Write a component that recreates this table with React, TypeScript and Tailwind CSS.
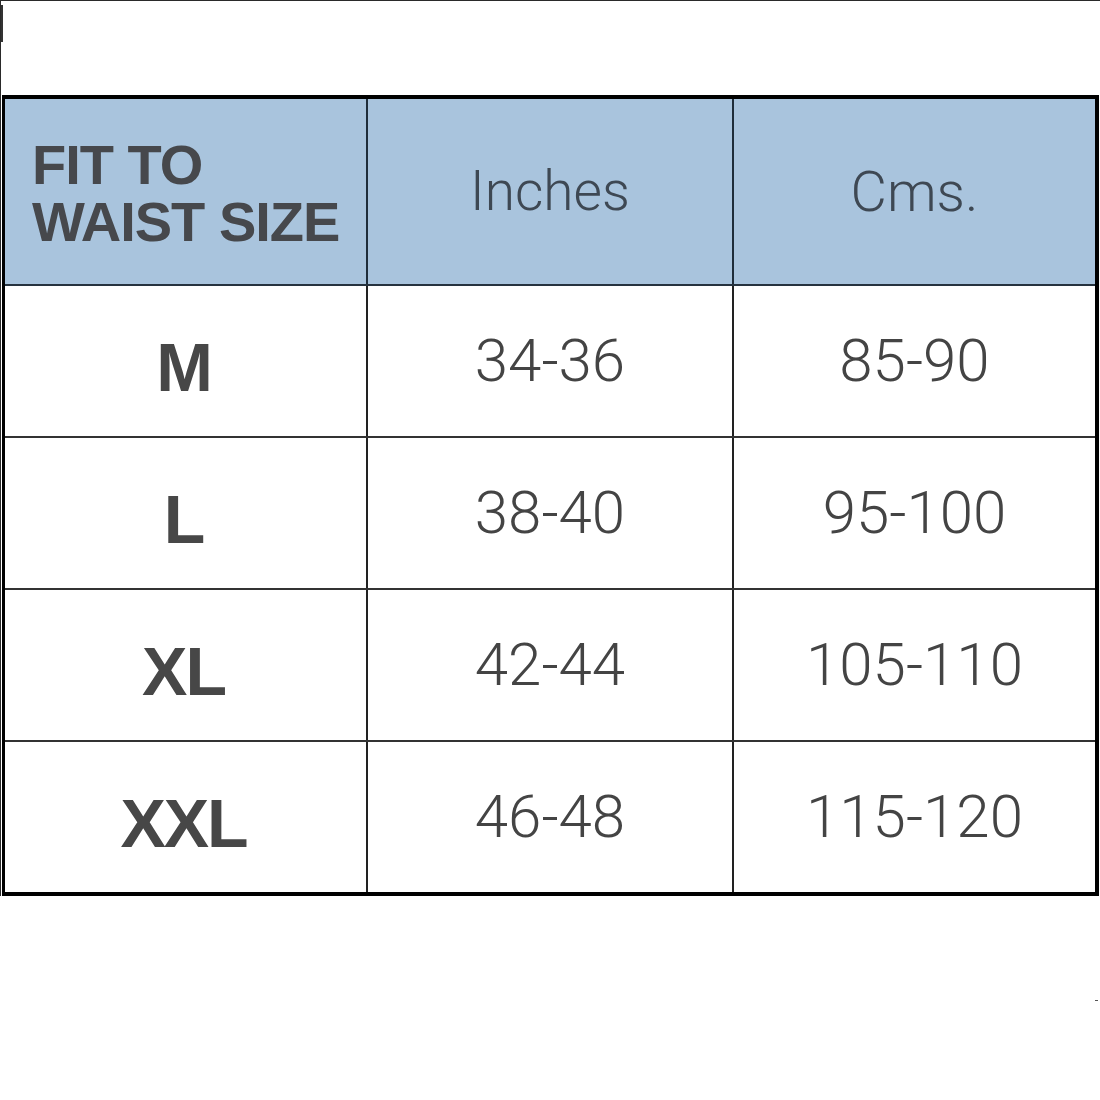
import React from "react";

const rows = [
  { size: "M", inches: "34-36", cms: "85-90" },
  { size: "L", inches: "38-40", cms: "95-100" },
  { size: "XL", inches: "42-44", cms: "105-110" },
  { size: "XXL", inches: "46-48", cms: "115-120" },
];

export default function App() {
  return (
    <div className="w-[1100px] h-[1100px] bg-white border-t border-[#2a2a2a] overflow-hidden">
      <div className="h-[94px] border-l border-[#2a2a2a] flex items-start">
        <div className="w-[2px] h-[37px] mt-[4px] bg-[#333]" />
      </div>
      <div className="border-l border-[#2a2a2a] pl-[1px] w-[1100px]">
        <div className="w-[1097px] border-t-[4px] border-l-[3px] border-r-[4px] border-b-[4px] border-black flex flex-col">
          <div className="h-[187px] flex bg-[#a9c4dd] border-b-2 border-[#26333f]">
            <div className="w-[363px] border-r-2 border-[#1f2d3a] flex items-center pl-[27px]">
              <div
                className="text-[56px] leading-[57px] font-bold tracking-[-1px] text-[#46484c] pt-[2px]"
                style={{ fontFamily: '"Liberation Sans", Arial, sans-serif' }}
              >
                FIT TO
                <br />
                WAIST SIZE
              </div>
            </div>
            <div className="w-[366px] border-r-2 border-[#1f2d3a] flex items-center justify-center">
              <span
                className="text-[55px] font-light text-[#3e4853] leading-none"
                style={{ fontFamily: 'Roboto, "Liberation Sans", sans-serif' }}
              >
                Inches
              </span>
            </div>
            <div className="flex-1 flex items-center justify-center">
              <span
                className="text-[56px] font-light text-[#3e4853] leading-none"
                style={{ fontFamily: 'Roboto, "Liberation Sans", sans-serif' }}
              >
                Cms.
              </span>
            </div>
          </div>
          {rows.map((r, i) => (
            <div
              key={r.size}
              className={
                i < rows.length - 1
                  ? "h-[152px] flex border-b-2 border-[#333]"
                  : "h-[150px] flex"
              }
            >
              <div className="w-[363px] border-r-2 border-[#222] flex items-center justify-center pt-[12px] pr-[4px]">
                <span
                  className="text-[68px] font-bold tracking-[-2px] text-[#474747] leading-none"
                  style={{ fontFamily: '"Liberation Sans", Arial, sans-serif' }}
                >
                  {r.size}
                </span>
              </div>
              <div className="w-[366px] border-r-2 border-[#222] flex items-center justify-center">
                <span
                  className="text-[60px] font-light text-[#444] leading-none"
                  style={{ fontFamily: 'Roboto, "Liberation Sans", sans-serif' }}
                >
                  {r.inches}
                </span>
              </div>
              <div className="flex-1 flex items-center justify-center">
                <span
                  className="text-[60px] font-light text-[#444] leading-none"
                  style={{ fontFamily: 'Roboto, "Liberation Sans", sans-serif' }}
                >
                  {r.cms}
                </span>
              </div>
            </div>
          ))}
        </div>
      </div>
      <div className="pt-[104px] flex justify-end pr-[2px]">
        <div className="w-[3px] h-[1px] bg-[#555]" />
      </div>
    </div>
  );
}
